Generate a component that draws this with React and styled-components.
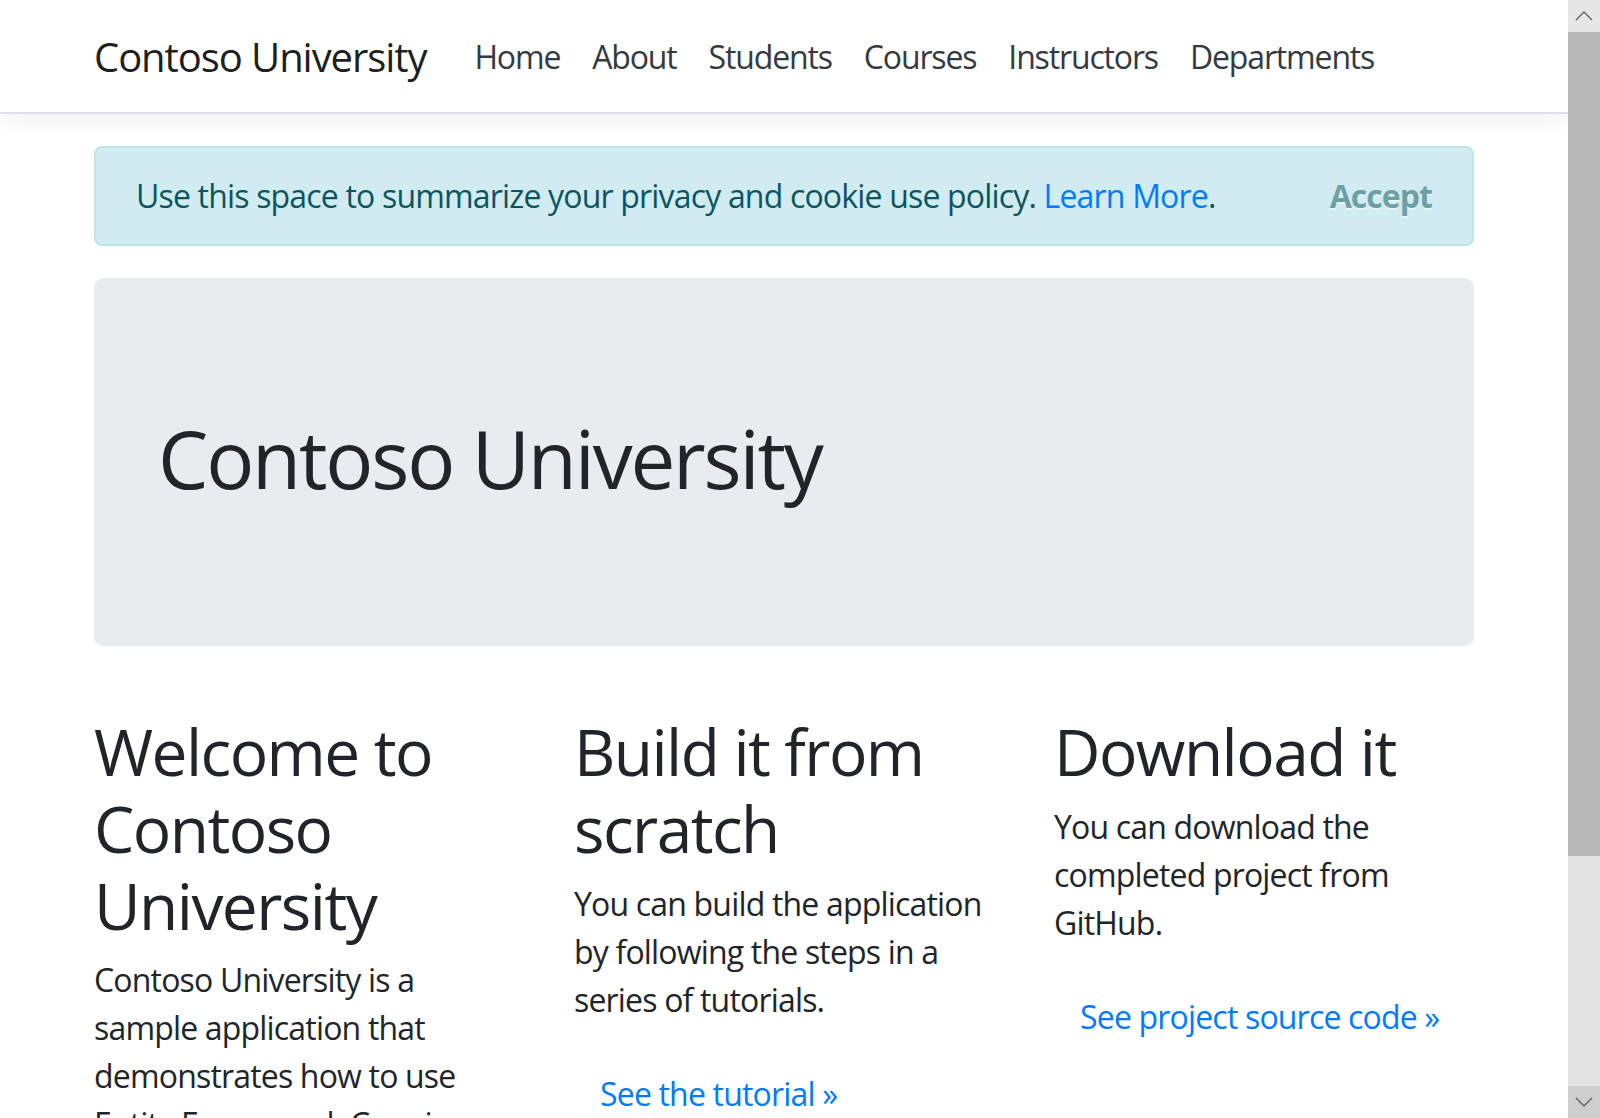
import styled, { createGlobalStyle } from 'styled-components';

const GlobalStyle = createGlobalStyle`
  html, body {
    margin: 0;
    padding: 0;
    height: 100%;
    overflow: hidden;
  }
  body {
    font-family: "Open Sans", "Noto Sans", "Liberation Sans", sans-serif;
    font-size: 32px;
    line-height: 1.5;
    color: #212529;
    background: #fff;
    letter-spacing: -0.82px;
  }
  *, *::before, *::after {
    box-sizing: border-box;
  }
`;

const navItems = ['Home', 'About', 'Students', 'Courses', 'Instructors', 'Departments'];

export default function App() {
  return (
    <>
      <GlobalStyle />
      <Frame>
        <Page>
          <Navbar>
            <Container>
              <Brand href="#">Contoso University</Brand>
              <NavList>
                {navItems.map(item => (
                  <NavLink key={item} href="#">
                    {item}
                  </NavLink>
                ))}
              </NavList>
            </Container>
          </Navbar>

          <Container as="main">
            <Alert>
              <span>
                Use this space to summarize your privacy and cookie use policy.{' '}
                <Link href="#">Learn More</Link>.
              </span>
              <AcceptButton type="button">Accept</AcceptButton>
            </Alert>

            <Jumbotron>
              <Title>Contoso University</Title>
            </Jumbotron>

            <Row>
              <Column>
                <Heading>Welcome to Contoso University</Heading>
                <Text>
                  Contoso University is a sample application that demonstrates
                  how to use Entity Framework Core in an ASP.NET Core MVC web
                  application.
                </Text>
              </Column>
              <Column>
                <Heading>Build it from scratch</Heading>
                <Text>
                  You can build the application by following the steps in a
                  series of tutorials.
                </Text>
                <Text>
                  <ButtonLink href="#">See the tutorial &raquo;</ButtonLink>
                </Text>
              </Column>
              <Column>
                <Heading>Download it</Heading>
                <Text>You can download the completed project from GitHub.</Text>
                <Text>
                  <ButtonLink href="#">See project source code &raquo;</ButtonLink>
                </Text>
              </Column>
            </Row>
          </Container>
        </Page>

        <Scrollbar>
          <ScrollButton>
            <svg width="18" height="10" viewBox="0 0 18 10">
              <polyline points="1,9 9,1 17,9" fill="none" stroke="#5f5f5f" strokeWidth="1.3" />
            </svg>
          </ScrollButton>
          <Thumb />
          <Track />
          <ScrollButton $dark>
            <svg width="18" height="10" viewBox="0 0 18 10">
              <polyline points="1,1 9,9 17,1" fill="none" stroke="#5f5f5f" strokeWidth="1.3" />
            </svg>
          </ScrollButton>
        </Scrollbar>
      </Frame>
    </>
  );
}

const Frame = styled.div`
  display: flex;
  height: 100vh;
`;

const Page = styled.div`
  flex: 1;
  overflow: hidden;
`;

const Container = styled.div`
  width: 1440px;
  margin: 0 auto;
  padding: 0 30px;
`;

const Navbar = styled.nav`
  padding: 16px 0;
  background: #fff;
  border-bottom: 2px solid #dee2e6;
  box-shadow: 0 8px 24px rgba(0, 0, 0, 0.05);
  margin-bottom: 32px;

  & > ${Container} {
    display: flex;
    align-items: center;
  }
`;

const Brand = styled.a`
  font-size: 40px;
  line-height: 1.5;
  padding: 11px 0 9px;
  margin-right: 32px;
  color: rgba(0, 0, 0, 0.9);
  text-decoration: none;
  white-space: nowrap;
  letter-spacing: -1.07px;
`;

const NavList = styled.div`
  display: flex;
`;

const NavLink = styled.a`
  padding: 17px 16px 15px;
  color: #343a40;
  text-decoration: none;
  letter-spacing: -1.15px;
`;

const Alert = styled.div`
  display: flex;
  justify-content: space-between;
  align-items: center;
  padding: 24px 40px;
  margin-bottom: 32px;
  background: #d1ecf1;
  border: 2px solid #bee5eb;
  border-radius: 8px;
  color: #0c5460;
`;

const Link = styled.a`
  color: #007bff;
  text-decoration: none;
`;

const AcceptButton = styled.button`
  padding: 0;
  border: 0;
  background: transparent;
  font-family: inherit;
  font-size: 32px;
  font-weight: 700;
  line-height: inherit;
  letter-spacing: -0.96px;
  color: #0c5460;
  opacity: 0.5;
  text-shadow: 0 2px 0 #fff;
  cursor: pointer;
`;

const Jumbotron = styled.div`
  padding: 128px 64px;
  margin-bottom: 64px;
  background: #e9ecef;
  border-radius: 9.6px;
`;

const Title = styled.h1`
  margin: 0 0 12px;
  padding-top: 4px;
  font-size: 80px;
  font-weight: 400;
  line-height: 1.2;
  letter-spacing: -2.2px;
`;

const Row = styled.div`
  display: grid;
  grid-template-columns: repeat(3, 1fr);
  column-gap: 60px;
`;

const Column = styled.div``;

const Heading = styled.h2`
  margin: 0 0 12px;
  padding-top: 4px;
  font-size: 64px;
  font-weight: 400;
  line-height: 1.2;
  letter-spacing: -1.55px;
`;

const Text = styled.p`
  margin: 0 0 32px;
`;

const ButtonLink = styled.a`
  display: inline-block;
  padding: 12px 24px;
  border: 2px solid transparent;
  color: #007bff;
  text-decoration: none;
`;

const Scrollbar = styled.div`
  width: 32px;
  display: flex;
  flex-direction: column;
  background: #e3e3e3;
`;

const ScrollButton = styled.div`
  height: 32px;
  display: flex;
  align-items: center;
  justify-content: center;
  background: ${p => (p.$dark ? '#cfcfcf' : '#e6e6e6')};
`;

const Thumb = styled.div`
  height: 824px;
  background: #b9b9b9;
`;

const Track = styled.div`
  flex: 1;
`;
